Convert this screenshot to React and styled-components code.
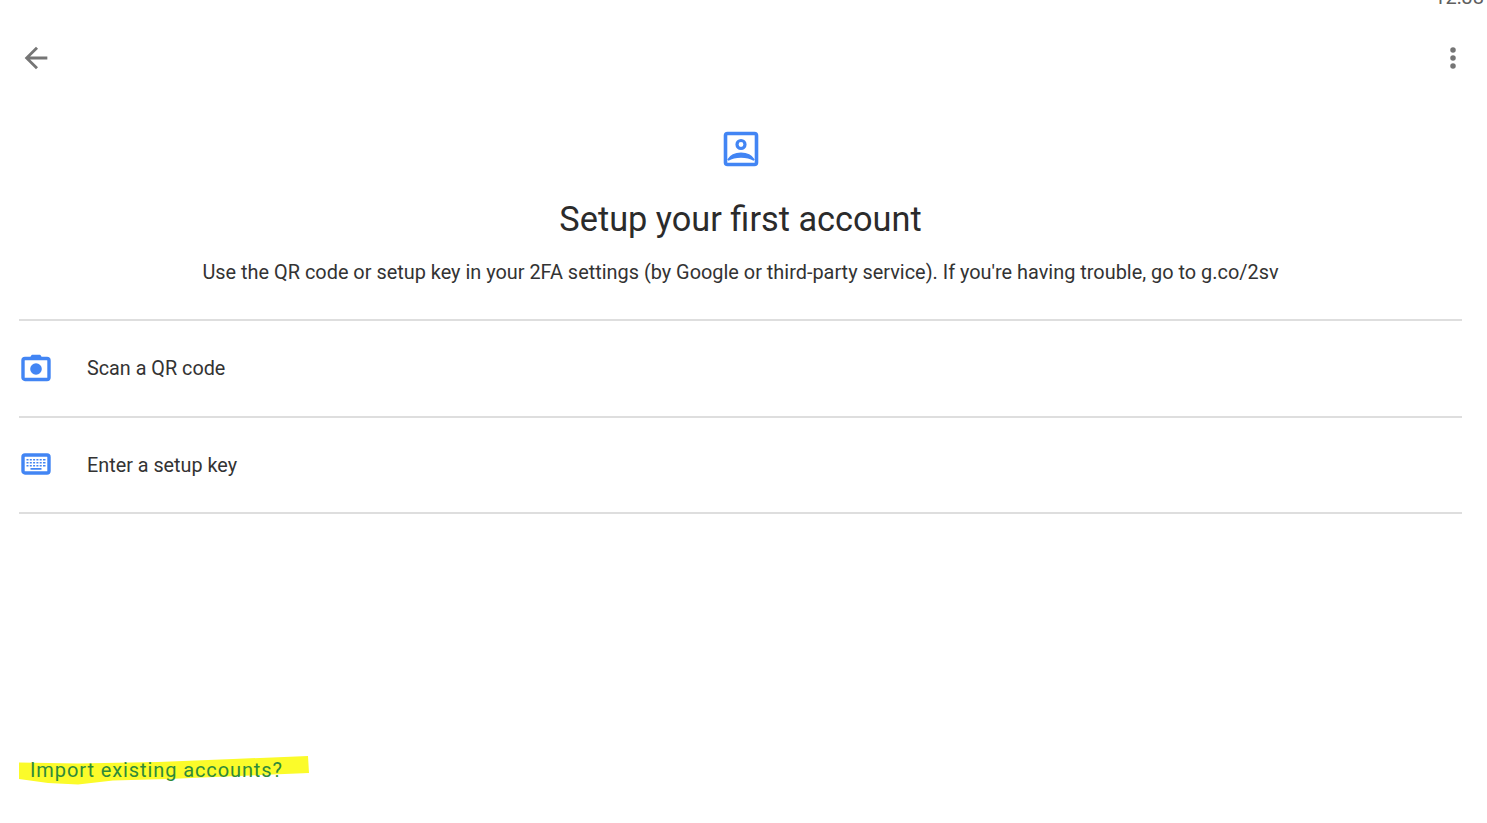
import styled, { createGlobalStyle } from "styled-components";

const GlobalStyle = createGlobalStyle`
  html, body {
    margin: 0;
    padding: 0;
    background: #ffffff;
  }
  body {
    font-family: Roboto, "Liberation Sans", sans-serif;
    color: #2b2b2b;
  }
`;

function App() {
  return (
    <Page>
      <GlobalStyle />
      <StatusBar>
        <Clock>12:38</Clock>
      </StatusBar>
      <Toolbar>
        <svg width="34" height="34" viewBox="0 0 24 24" fill="#757575">
          <path d="M20 11H7.830l5.590-5.590L12 4l-8 8 8 8 1.410-1.410L7.830 13H20v-2z" />
        </svg>
        <svg width="30" height="30" viewBox="0 0 24 24" fill="#757575">
          <circle cx="12" cy="5.600" r="2.200" />
          <circle cx="12" cy="12" r="2.200" />
          <circle cx="12" cy="18.400" r="2.200" />
        </svg>
      </Toolbar>
      <Header>
        <svg width="40" height="40" viewBox="0 0 40 40" fill="none">
          <rect x="4.500" y="4.500" width="31" height="31" rx="2" stroke="#4285f4" strokeWidth="3.600" />
          <circle cx="20" cy="15.500" r="4" stroke="#4285f4" strokeWidth="3.200" />
          <path d="M7 31c3-5 8-6.500 13-6.500S30 26 33 31c-4-2.500-8.500-3.200-13-3.200S11 28.500 7 31z" fill="#4285f4" stroke="#4285f4" strokeWidth="1.800" />
        </svg>
        <Title>Setup your first account</Title>
        <Description>
          Use the QR code or setup key in your 2FA settings (by Google or third-party service). If you're having trouble, go to g.co/2sv
        </Description>
      </Header>
      <List>
        <Row>
          <RowIcon>
            <svg width="32" height="32" viewBox="0 0 32 32" fill="none">
              <path d="M11 5.500 12.200 3.500h7.600L21 5.500z" fill="#4285f4" stroke="#4285f4" strokeWidth="1.500" strokeLinejoin="round" />
              <rect x="3" y="6.500" width="26" height="21" rx="2" stroke="#4285f4" strokeWidth="3.400" />
              <circle cx="16" cy="17" r="5.800" fill="#4285f4" />
            </svg>
          </RowIcon>
          <RowLabel>Scan a QR code</RowLabel>
        </Row>
        <Row>
          <RowIcon>
            <svg width="32" height="32" viewBox="0 0 32 32" fill="none">
              <rect x="3" y="6" width="26" height="18" rx="2" stroke="#4285f4" strokeWidth="3.400" />
              <path
                d="M6.500 10h2v1.600h-2zM9.800 10h2v1.600h-2zM13.100 10h2v1.600h-2zM16.400 10h2v1.600h-2zM19.700 10h2v1.600h-2zM23 10h2.500v1.600H23zM6.500 13h2v1.600h-2zM9.800 13h2v1.600h-2zM13.100 13h2v1.600h-2zM16.400 13h2v1.600h-2zM19.700 13h2v1.600h-2zM23 13h2.500v1.600H23zM6.500 16h2v1.600h-2zM9.800 16h2v1.600h-2zM13.100 16h2v1.600h-2zM16.400 16h2v1.600h-2zM19.700 16h2v1.600h-2zM23 16h2.500v1.600H23zM10.500 19h11v1.800h-11z"
                fill="#4285f4"
              />
            </svg>
          </RowIcon>
          <RowLabel>Enter a setup key</RowLabel>
        </Row>
      </List>
      <Footer>
        <ImportLink>
          <Marker width="292" height="32" viewBox="0 0 292 32">
            <path
              d="M1 8.500 60 9.500 140 8 215 5 290 2 291 19 220 22 150 25 95 26.500 60 30.500 30 29 1 25z"
              fill="#fbfb2a"
            />
          </Marker>
          <ImportText>Import existing accounts?</ImportText>
        </ImportLink>
      </Footer>
    </Page>
  );
}

export default App;

const Page = styled.div`
  width: 1487px;
  height: 823px;
  overflow: hidden;
  display: flex;
  flex-direction: column;
`;

const StatusBar = styled.div`
  height: 6px;
  overflow: hidden;
  display: flex;
  justify-content: flex-end;
  align-items: flex-end;
  padding-right: 3px;
`;

const Clock = styled.span`
  font-size: 20px;
  line-height: 20px;
  color: #5f5f5f;
  flex: none;
  margin-bottom: -1px;
`;

const Toolbar = styled.div`
  height: 28px;
  margin-top: 38px;
  padding: 0 19px 0 19px;
  display: flex;
  justify-content: space-between;
  align-items: center;
`;

const Header = styled.div`
  margin-top: 57px;
  display: flex;
  flex-direction: column;
  align-items: center;
  padding-right: 6px;
`;

const Title = styled.h1`
  margin: 29px 0 0;
  font-size: 34.300px;
  line-height: 42px;
  font-weight: 400;
  color: #2b2b2b;
`;

const Description = styled.p`
  margin: 20px 0 0;
  font-size: 19.900px;
  line-height: 26px;
  white-space: nowrap;
  color: #333333;
`;

const List = styled.div`
  margin: 33px 25px 0 19px;
  border-top: 2px solid #dedede;
`;

const Row = styled.div`
  height: 94.500px;
  display: flex;
  align-items: center;
  border-bottom: 2px solid #dedede;
`;

const RowIcon = styled.div`
  width: 68px;
  flex: none;
  display: flex;
  align-items: center;
  svg {
    margin-left: 1px;
  }
`;

const RowLabel = styled.span`
  font-size: 19.800px;
  color: #333333;
  padding-top: 1px;
`;

const Footer = styled.div`
  margin-top: auto;
  padding: 0 0 37px 18px;
`;

const ImportLink = styled.div`
  position: relative;
  width: 292px;
  height: 32px;
  display: flex;
  align-items: center;
`;

const Marker = styled.svg`
  position: absolute;
  inset: 0;
`;

const ImportText = styled.span`
  position: relative;
  margin-left: 12px;
  font-size: 20px;
  letter-spacing: 0.9px;
  color: #2f8a3a;
`;
